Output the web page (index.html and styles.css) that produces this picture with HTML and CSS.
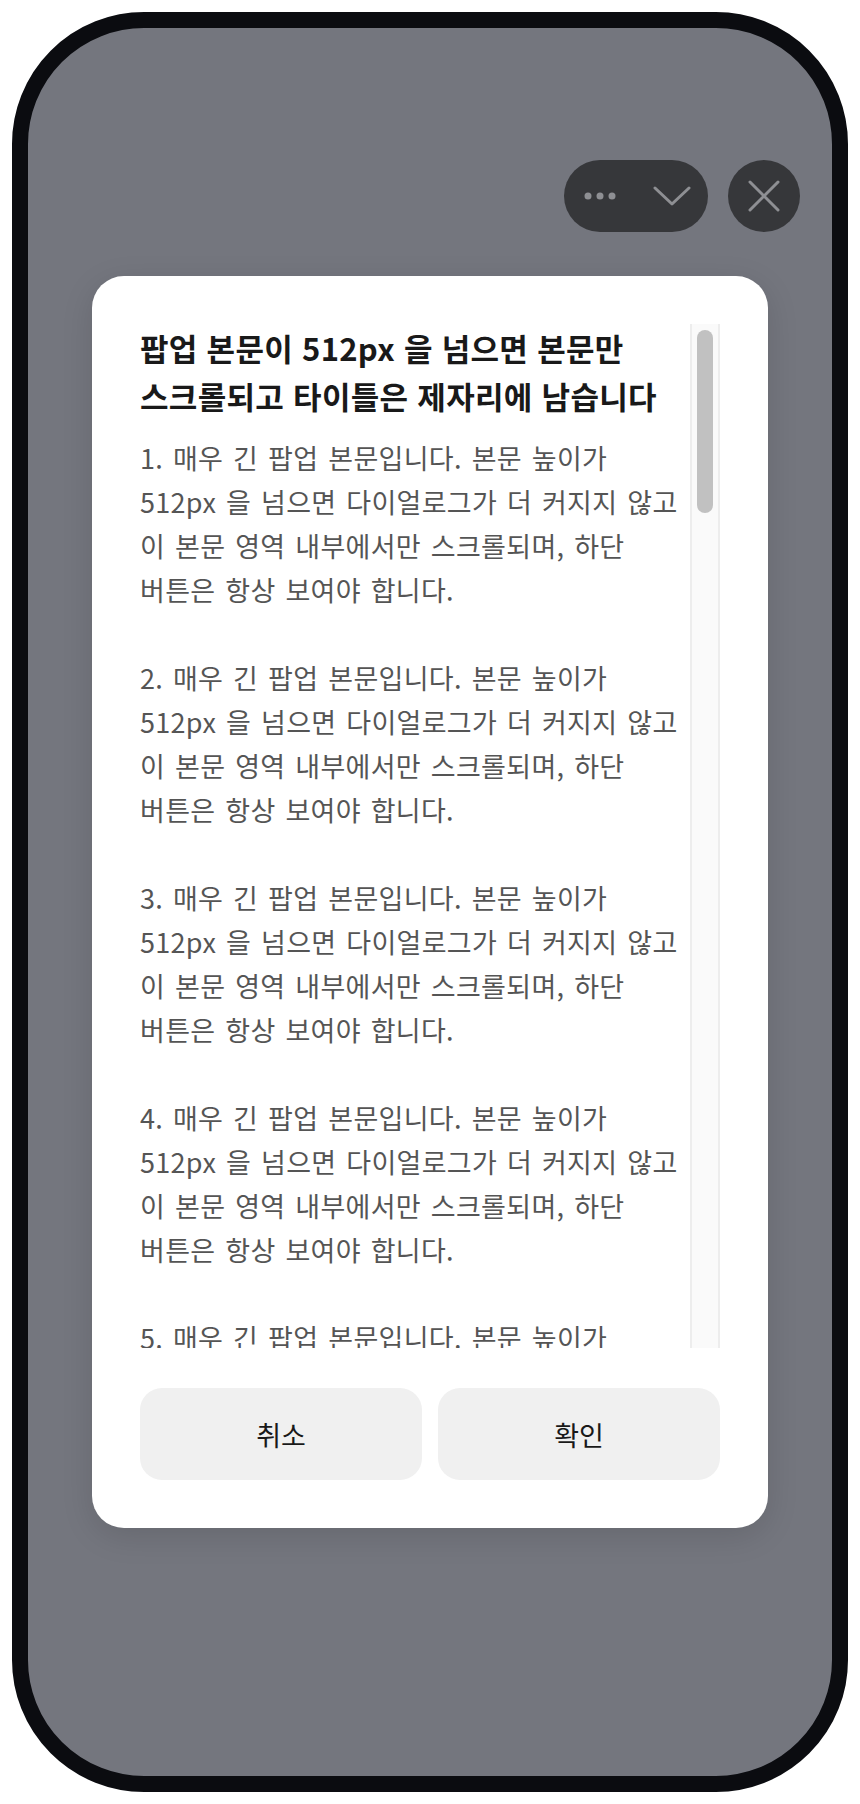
FILE: index.html
```html
<!DOCTYPE html>
<html lang="ko">
<head>
  <meta charset="UTF-8">
  <title>팝업 스크롤</title>
  <link rel="stylesheet" href="styles.css">
</head>
<body>
  <div class="device">
    <div class="topbar">
      <div class="capsule">
        <button class="capsule-btn" aria-label="더보기">
          <svg width="34" height="8" viewBox="0 0 34 8">
            <circle cx="5" cy="4" r="3.5" fill="#8e8f93"/>
            <circle cx="17" cy="4" r="3.5" fill="#8e8f93"/>
            <circle cx="29" cy="4" r="3.5" fill="#8e8f93"/>
          </svg>
        </button>
        <button class="capsule-btn" aria-label="접기">
          <svg width="38" height="22" viewBox="0 0 38 22">
            <path d="M2 3 L19 19 L36 3" fill="none" stroke="#8e8f93" stroke-width="3" stroke-linecap="round" stroke-linejoin="round"/>
          </svg>
        </button>
      </div>
      <button class="close-btn" aria-label="닫기">
        <svg width="32" height="32" viewBox="0 0 32 32">
          <path d="M2 2 L30 30 M30 2 L2 30" fill="none" stroke="#8e8f93" stroke-width="3" stroke-linecap="round"/>
        </svg>
      </button>
    </div>

    <div class="dialog">
      <div class="dialog-body">
        <div class="dialog-scroll">
          <h2 class="dialog-title">팝업 본문이 512px 을 넘으면 본문만 스크롤되고 타이틀은 제자리에 남습니다</h2>
          <p>1. 매우 긴 팝업 본문입니다. 본문 높이가 512px 을 넘으면 다이얼로그가 더 커지지 않고 이 본문 영역 내부에서만 스크롤되며, 하단 버튼은 항상 보여야 합니다.</p>
          <p>2. 매우 긴 팝업 본문입니다. 본문 높이가 512px 을 넘으면 다이얼로그가 더 커지지 않고 이 본문 영역 내부에서만 스크롤되며, 하단 버튼은 항상 보여야 합니다.</p>
          <p>3. 매우 긴 팝업 본문입니다. 본문 높이가 512px 을 넘으면 다이얼로그가 더 커지지 않고 이 본문 영역 내부에서만 스크롤되며, 하단 버튼은 항상 보여야 합니다.</p>
          <p>4. 매우 긴 팝업 본문입니다. 본문 높이가 512px 을 넘으면 다이얼로그가 더 커지지 않고 이 본문 영역 내부에서만 스크롤되며, 하단 버튼은 항상 보여야 합니다.</p>
          <p>5. 매우 긴 팝업 본문입니다. 본문 높이가 512px 을 넘으면 다이얼로그가 더 커지지 않고 이 본문 영역 내부에서만 스크롤되며, 하단 버튼은 항상 보여야 합니다.</p>
        </div>
        <div class="scrollbar">
          <div class="scrollbar-thumb"></div>
        </div>
      </div>
      <div class="dialog-actions">
        <button class="action">취소</button>
        <button class="action">확인</button>
      </div>
    </div>
  </div>
</body>
</html>
```

FILE: styles.css
```css
html, body {
  margin: 0;
  padding: 0;
  background-color: #ffffff;
}

body {
  font-family: "Noto Sans CJK KR", "Noto Sans", sans-serif;
  color: #191919;
}

button {
  font-family: inherit;
  border: none;
  padding: 0;
  cursor: pointer;
}

.device {
  box-sizing: border-box;
  margin: 12px;
  height: 1780px;
  border: 16px solid #0b0c10;
  border-radius: 132px;
  background-color: #74767e;
  overflow: hidden;
}

/* 상단 캡슐 버튼 */
.topbar {
  display: flex;
  justify-content: flex-end;
  align-items: center;
  gap: 20px;
  padding: 132px 32px 0 0;
}

.capsule {
  display: flex;
  width: 144px;
  height: 72px;
  border-radius: 36px;
  background-color: #36373a;
}

.capsule-btn {
  flex: 1;
  display: flex;
  align-items: center;
  justify-content: center;
  background: transparent;
}

.close-btn {
  display: flex;
  align-items: center;
  justify-content: center;
  width: 72px;
  height: 72px;
  border-radius: 50%;
  background-color: #36373a;
}

/* 다이얼로그 */
.dialog {
  width: 676px;
  box-sizing: border-box;
  margin: 44px auto 0;
  padding: 48px;
  border-radius: 32px;
  background-color: #ffffff;
  box-shadow: 0 8px 32px rgba(0, 0, 0, 0.12);
}

.dialog-body {
  display: flex;
  height: 1024px;
}

.dialog-scroll {
  flex: 1;
  min-width: 0;
  overflow: hidden;
  word-break: keep-all;
}

.scrollbar {
  box-sizing: border-box;
  width: 30px;
  padding: 6px 5px;
  background-color: #fafafa;
  border-left: 2px solid #ededed;
  border-right: 2px solid #ededed;
}

.scrollbar-thumb {
  height: 183px;
  border-radius: 8px;
  background-color: #c1c1c1;
}

.dialog-title {
  margin: 0 0 16px;
  font-size: 31px;
  line-height: 48px;
  font-weight: 700;
  letter-spacing: 0.3px;
  color: #191919;
}

.dialog-scroll p {
  margin: 0 0 44px;
  padding-right: 4px;
  font-size: 27px;
  line-height: 44px;
  letter-spacing: 0.3px;
  word-spacing: 2px;
  color: #555555;
}

.dialog-actions {
  display: grid;
  grid-template-columns: 1fr 1fr;
  gap: 16px;
  margin-top: 40px;
}

.action {
  height: 92px;
  border-radius: 22px;
  background-color: #f0f0f0;
  font-size: 27px;
  color: #191919;
}
```
